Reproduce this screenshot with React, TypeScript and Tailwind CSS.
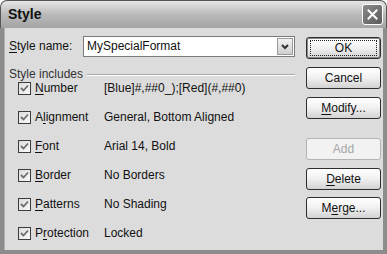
import React from "react";

const font = "font-['Tahoma','Liberation_Sans',sans-serif]";

function U({ children }: { children: React.ReactNode }) {
  return <span className="underline underline-offset-[2px] decoration-[1px]">{children}</span>;
}

function Check() {
  return (
    <div className="w-[13px] h-[13px] border border-[#3c3c3c] bg-gradient-to-br from-[#dcdcdc] to-[#fafafa] flex items-center justify-center">
      <svg width="9" height="9" viewBox="0 0 9 9">
        <path d="M1 4 L3.5 6.5 L8 1.5" fill="none" stroke="#6e6e6e" strokeWidth="1.8" />
      </svg>
    </div>
  );
}

function Btn({
  children,
  mt,
  isDefault,
  disabled,
}: {
  children: React.ReactNode;
  mt: string;
  isDefault?: boolean;
  disabled?: boolean;
}) {
  return (
    <div
      className={`${mt} h-[22px] w-[75px] rounded-[3px] border flex items-center justify-center ${
        disabled
          ? "border-[#b4b4b4] bg-[#f2f2f2] text-[#a6a6a6]"
          : "border-[#2e2e2e] bg-gradient-to-b from-[#ffffff] via-[#f0f0f0] to-[#d2d2d2] text-[#111]"
      } ${isDefault ? "shadow-[inset_0_0_0_1px_#8a8a8a]" : ""}`}
    >
      {isDefault ? (
        <div className="w-[67px] h-[16px] border border-dotted border-[#222] flex items-center justify-center">
          {children}
        </div>
      ) : (
        children
      )}
    </div>
  );
}

const rows: [React.ReactNode, string][] = [
  [<><U>N</U>umber</>, "[Blue]#,##0_);[Red](#,##0)"],
  [<>A<U>l</U>ignment</>, "General, Bottom Aligned"],
  [<><U>F</U>ont</>, "Arial 14, Bold"],
  [<><U>B</U>order</>, "No Borders"],
  [<><U>P</U>atterns</>, "No Shading"],
  [<>P<U>r</U>otection</>, "Locked"],
];

export default function App() {
  return (
    <div className={`w-[387px] h-[254px] flex flex-col ${font} text-[12px] text-[#111] leading-[15px]`}>
      <div className="h-[28px] shrink-0 rounded-t-[7px] border border-b-0 border-[#555] bg-gradient-to-b from-[#e6e6e6] via-[#bababa] to-[#a4a4a4] flex items-center justify-between pl-[7px] pr-[3px]">
        <span className="font-bold text-[14px] text-[#111] font-['Liberation_Sans',sans-serif]">Style</span>
        <div className="w-[21px] h-[21px] rounded-[3px] border border-white bg-gradient-to-br from-[#8a8a8a] to-[#5c5c5c] flex items-center justify-center">
          <svg width="11" height="11" viewBox="0 0 11 11">
            <path d="M1.5 1.5 L9.5 9.5 M9.5 1.5 L1.5 9.5" stroke="white" strokeWidth="2" strokeLinecap="square" />
          </svg>
        </div>
      </div>
      <div className="flex-1 flex border-x-[4px] border-b-[4px] border-x-[#8c8c8c] border-b-[#8c8c8c] bg-[#dcdcdc] shadow-[inset_1px_0_0_#b0b0b0]">
        <div className="w-[291px] pl-[5px] pt-[8px] flex flex-col">
          <div className="h-[21px] flex items-center">
            <span className="w-[74px]"><U>S</U>tyle name:</span>
            <div className="flex-1 h-[21px] border border-[#7a7a7a] bg-white flex items-center justify-between pl-[3px] pr-[1px]">
              <span>MySpecialFormat</span>
              <div className="w-[16px] h-[17px] border border-[#9a9a9a] bg-gradient-to-b from-[#f2f2f2] to-[#cfcfcf] flex items-center justify-center">
                <svg width="8" height="6" viewBox="0 0 8 6">
                  <path d="M1 1 L4 4 L7 1" fill="none" stroke="#333" strokeWidth="2" />
                </svg>
              </div>
            </div>
          </div>
          <div className="mt-[11px] h-[13px] flex items-center">
            <span className="text-[#333]">Style includes</span>
            <div className="flex-1 ml-[4px] h-[2px] border-t border-[#a8a8a8] border-b border-b-white" />
          </div>
          <div className="flex flex-col gap-[15px] pl-[9px]">
            {rows.map(([label, value], i) => (
              <div key={i} className="h-[14px] flex items-center">
                <Check />
                <span className="ml-[4px] w-[69px]">{label}</span>
                <span>{value}</span>
              </div>
            ))}
          </div>
        </div>
        <div className="ml-[11px] flex flex-col">
          <Btn mt="mt-[9px]" isDefault>OK</Btn>
          <Btn mt="mt-[8px]">Cancel</Btn>
          <Btn mt="mt-[8px]"><span><U>M</U>odify...</span></Btn>
          <Btn mt="mt-[19px]" disabled>Add</Btn>
          <Btn mt="mt-[8px]"><span><U>D</U>elete</span></Btn>
          <Btn mt="mt-[7px]"><span>M<U>e</U>rge...</span></Btn>
        </div>
      </div>
    </div>
  );
}
